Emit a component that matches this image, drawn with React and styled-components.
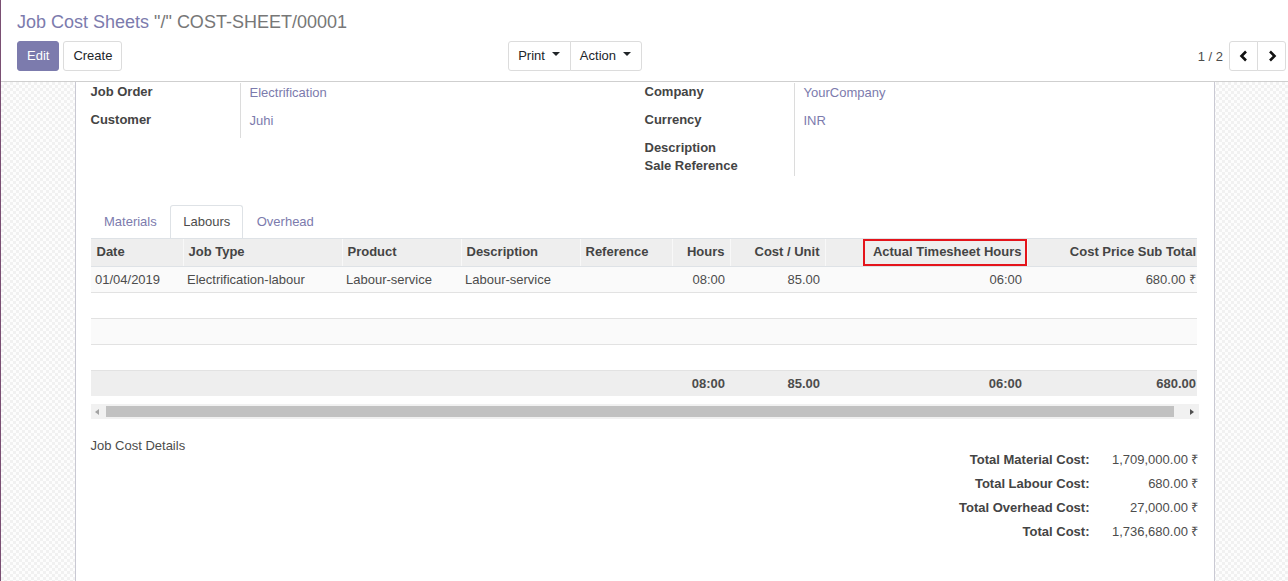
import React from "react";
import styled, { createGlobalStyle } from "styled-components";

const Global = createGlobalStyle`
  html, body { margin: 0; padding: 0; height: 100%; }
  body {
    font-family: "Liberation Sans", Arial, sans-serif;
    font-size: 13px;
    color: #4c4c4c;
    background: #fff;
    overflow: hidden;
  }
  * { box-sizing: border-box; }
`;

const Page = styled.div`
  height: 581px;
  display: flex;
  flex-direction: column;
  border-left: 1px solid #7a4f73;
  overflow: hidden;
`;

const ControlPanel = styled.div`
  flex: 0 0 auto;
  padding: 11px 2px 10px 16px;
  border-bottom: 1px solid #cfcfcf;
  background: #fff;
`;

const Breadcrumb = styled.div`
  font-size: 18px;
  line-height: 22px;
  height: 22px;
  white-space: nowrap;
`;

const Crumb = styled.span`
  color: ${(p) => (p.$active ? "#777777" : "#7c7bad")};
`;

const ControlRow = styled.div`
  margin-top: 8px;
  display: flex;
  align-items: center;
  justify-content: space-between;
`;

const LeftHalf = styled.div`
  width: 625px;
  display: flex;
  justify-content: space-between;
  align-items: center;
`;

const BtnRow = styled.div`
  display: flex;
  gap: 4px;
`;

const Btn = styled.button`
  font-family: inherit;
  font-size: 13px;
  line-height: 18px;
  height: 30px;
  padding: 5px 9px;
  border-radius: 3px;
  border: 1px solid ${(p) => (p.$primary ? "#7c7bad" : "#dcdcdc")};
  background: ${(p) => (p.$primary ? "#7c7bad" : "#fff")};
  color: ${(p) => (p.$primary ? "#fff" : "#212529")};
  display: inline-flex;
  align-items: center;
  cursor: pointer;
`;

const Group = styled.div`
  display: flex;
  & > ${Btn} {
    border-radius: 0;
  }
  & > ${Btn}:first-child {
    border-radius: 3px 0 0 3px;
  }
  & > ${Btn}:last-child {
    border-radius: 0 3px 3px 0;
    margin-left: -1px;
  }
`;

const DropBtn = styled(Btn)`
  padding-left: 9px;
  padding-right: 10px;
`;

const Caret = styled.span`
  display: inline-block;
  margin-left: 7px;
  width: 0;
  height: 0;
  border-left: 4px solid transparent;
  border-right: 4px solid transparent;
  border-top: 4px solid #212529;
  transform: translateY(-2px);
`;

const Pager = styled.div`
  display: flex;
  align-items: center;
  gap: 6px;
`;

const PagerValue = styled.span`
  color: #4c4c4c;
  font-size: 13px;
`;

const PagerBtn = styled(Btn)`
  width: 29px;
  padding: 0;
  justify-content: center;
`;

const Content = styled.div`
  flex: 1 1 auto;
  background-color: #fafafa;
  background-image: repeating-conic-gradient(#f1f1f1 0 25%, #fdfdfd 0 50%);
  background-size: 6px 6px;
  overflow: hidden;
`;

const Sheet = styled.div`
  width: 1140px;
  margin: 0 auto;
  min-height: 100%;
  background: #fff;
  border-left: 1px solid #c9c9d3;
  border-right: 1px solid #c9c9d3;
  padding: 1px 15px 40px 15px;
`;

const Groups = styled.div`
  display: grid;
  grid-template-columns: 1fr 1fr;
`;

const FieldTable = styled.div`
  display: grid;
  grid-template-columns: 150px 1fr;
  align-content: start;
`;

const Label = styled.div`
  font-weight: bold;
  color: #444;
  line-height: 18px;
  height: ${(p) => p.$h}px;
  border-right: 1px solid #dcdcdc;
  white-space: nowrap;
`;

const Value = styled.div`
  color: #7c7bad;
  line-height: 18px;
  padding: 1px 0 0 9px;
  height: ${(p) => p.$h}px;
`;

const Notebook = styled.div`
  margin-top: 29px;
`;

const Tabs = styled.div`
  display: flex;
  height: 33px;
`;

const Tab = styled.div`
  padding: 0 ${(p) => (p.$active ? 12 : 12.5)}px;
  line-height: 31px;
  height: 33px;
  color: ${(p) => (p.$active ? "#4c4c4c" : "#7c7bad")};
  background: ${(p) => (p.$active ? "#fff" : "transparent")};
  border: 1px solid ${(p) => (p.$active ? "#dee2e6" : "transparent")};
  border-bottom: none;
  border-radius: 3px 3px 0 0;
`;

const TableWrap = styled.div`
  width: 1106px;
  overflow: hidden;
`;

const Table = styled.table`
  border-collapse: collapse;
  table-layout: fixed;
  width: 1110px;
  font-size: 13px;
`;

const Th = styled.th`
  position: relative;
  background: #eeeeee;
  font-weight: bold;
  color: #444;
  text-align: ${(p) => (p.$right ? "right" : "left")};
  padding: 4px 5px 5px;
  line-height: 18px;
  border-top: 1px solid #dee2e6;
  border-bottom: 1px solid #dee2e6;
  border-left: 1px solid ${(p) => (p.$first ? "#eeeeee" : "#f8f8f8")};
  white-space: nowrap;
  overflow: hidden;
`;

const Tr = styled.tr`
  background: ${(p) => (p.$odd ? "#fafafa" : "#fff")};
`;

const Td = styled.td`
  padding: 4px 5px 4px 4px;
  line-height: 17px;
  height: 26px;
  text-align: ${(p) => (p.$right ? "right" : "left")};
  border-bottom: 1px solid #e2e2e2;
  white-space: nowrap;
  overflow: hidden;
  color: #4c4c4c;
`;

const FootTd = styled.td`
  padding: 4px 5px;
  line-height: 17px;
  background: #eeeeee;
  border-top: 1px solid #e2e2e2;
  font-weight: bold;
  text-align: right;
  white-space: nowrap;
  color: #4c4c4c;
`;

const Highlight = styled.span`
  position: absolute;
  top: 0;
  bottom: 0;
  right: 0;
  width: 164px;
  border: 2px solid #e4141b;
  pointer-events: none;
`;

const ScrollTrack = styled.div`
  margin-top: 8px;
  height: 15px;
  background: #f1f1f1;
  display: flex;
  align-items: center;
  padding: 0 5px 0 4px;
`;

const ScrollThumb = styled.div`
  flex: 1 1 auto;
  height: 11px;
  background: #c1c1c1;
  margin: 0 16px 0 7px;
`;

const Arrow = styled.span`
  width: 0;
  height: 0;
  border-top: 3px solid transparent;
  border-bottom: 3px solid transparent;
  ${(p) =>
    p.$dir === "left"
      ? "border-right: 4px solid #a3a3a3;"
      : "border-left: 4px solid #505050;"}
`;

const Bottom = styled.div`
  margin-top: 18px;
  display: grid;
  grid-template-columns: 1fr 1fr;
`;

const Caption = styled.div`
  line-height: 18px;
  color: #4c4c4c;
`;

const Totals = styled.div`
  padding-top: 10px;
  display: grid;
  grid-template-columns: auto 108px;
  justify-content: end;
  grid-auto-rows: 24px;
  align-items: center;
`;

const TotalLabel = styled.div`
  font-weight: bold;
  text-align: right;
  color: #444;
  white-space: nowrap;
  padding-right: 1px;
`;

const TotalValue = styled.div`
  text-align: right;
  color: #4c4c4c;
  white-space: nowrap;
`;

const Chevron = ({ dir }) => (
  <svg width="10" height="12" viewBox="0 0 10 12">
    <polyline
      points={dir === "left" ? "7,1.5 2.5,6 7,10.5" : "3,1.5 7.5,6 3,10.5"}
      fill="none"
      stroke="#111"
      strokeWidth="2.6"
      strokeLinejoin="miter"
    />
  </svg>
);

const columns = [
  { name: "Date", w: 92 },
  { name: "Job Type", w: 159 },
  { name: "Product", w: 119 },
  { name: "Description", w: 119 },
  { name: "Reference", w: 92 },
  { name: "Hours", w: 58, right: true },
  { name: "Cost / Unit", w: 95, right: true },
  { name: "Actual Timesheet Hours", w: 202, right: true, mark: true },
  { name: "Cost Price Sub Total", w: 174, right: true },
];

const row = [
  "01/04/2019",
  "Electrification-labour",
  "Labour-service",
  "Labour-service",
  "",
  "08:00",
  "85.00",
  "06:00",
  "680.00 ₹",
];

const foot = ["", "", "", "", "", "08:00", "85.00", "06:00", "680.00"];

const totals = [
  ["Total Material Cost:", "1,709,000.00 ₹"],
  ["Total Labour Cost:", "680.00 ₹"],
  ["Total Overhead Cost:", "27,000.00 ₹"],
  ["Total Cost:", "1,736,680.00 ₹"],
];

export default function App() {
  return (
    <>
      <Global />
      <Page>
        <ControlPanel>
          <Breadcrumb>
            <Crumb>Job Cost Sheets</Crumb> <Crumb $active>"/" COST-SHEET/00001</Crumb>
          </Breadcrumb>
          <ControlRow>
            <LeftHalf>
              <BtnRow>
                <Btn $primary>Edit</Btn>
                <Btn>Create</Btn>
              </BtnRow>
              <Group>
                <DropBtn>
                  Print<Caret />
                </DropBtn>
                <DropBtn>
                  Action<Caret />
                </DropBtn>
              </Group>
            </LeftHalf>
            <Pager>
              <PagerValue>1 / 2</PagerValue>
              <Group>
                <PagerBtn>
                  <Chevron dir="left" />
                </PagerBtn>
                <PagerBtn>
                  <Chevron dir="right" />
                </PagerBtn>
              </Group>
            </Pager>
          </ControlRow>
        </ControlPanel>
        <Content>
          <Sheet>
            <Groups>
              <FieldTable>
                <Label $h={28}>Job Order</Label>
                <Value $h={28}>Electrification</Value>
                <Label $h={27}>Customer</Label>
                <Value $h={27}>Juhi</Value>
              </FieldTable>
              <FieldTable>
                <Label $h={28}>Company</Label>
                <Value $h={28}>YourCompany</Value>
                <Label $h={28}>Currency</Label>
                <Value $h={28}>INR</Value>
                <Label $h={18}>Description</Label>
                <Value $h={18} />
                <Label $h={19}>Sale Reference</Label>
                <Value $h={19} />
              </FieldTable>
            </Groups>
            <Notebook>
              <Tabs>
                <Tab>Materials</Tab>
                <Tab $active>Labours</Tab>
                <Tab>Overhead</Tab>
              </Tabs>
              <TableWrap>
                <Table>
                  <colgroup>
                    {columns.map((c) => (
                      <col key={c.name} style={{ width: c.w }} />
                    ))}
                  </colgroup>
                  <thead>
                    <tr>
                      {columns.map((c, i) => (
                        <Th key={c.name} $right={c.right} $first={i === 0}>
                          {c.name}
                          {c.mark && <Highlight />}
                        </Th>
                      ))}
                    </tr>
                  </thead>
                  <tbody>
                    <Tr $odd>
                      {row.map((v, i) => (
                        <Td key={i} $right={columns[i].right}>
                          {v}
                        </Td>
                      ))}
                    </Tr>
                    {[0, 1, 2].map((r) => (
                      <Tr key={r} $odd={r === 1}>
                        {columns.map((c) => (
                          <Td key={c.name} />
                        ))}
                      </Tr>
                    ))}
                  </tbody>
                  <tfoot>
                    <tr>
                      {foot.map((v, i) => (
                        <FootTd key={i}>{v}</FootTd>
                      ))}
                    </tr>
                  </tfoot>
                </Table>
              </TableWrap>
              <ScrollTrack>
                <Arrow $dir="left" />
                <ScrollThumb />
                <Arrow $dir="right" />
              </ScrollTrack>
            </Notebook>
            <Bottom>
              <Caption>Job Cost Details</Caption>
              <Totals>
                {totals.map(([l, v]) => (
                  <React.Fragment key={l}>
                    <TotalLabel>{l}</TotalLabel>
                    <TotalValue>{v}</TotalValue>
                  </React.Fragment>
                ))}
              </Totals>
            </Bottom>
          </Sheet>
        </Content>
      </Page>
    </>
  );
}
